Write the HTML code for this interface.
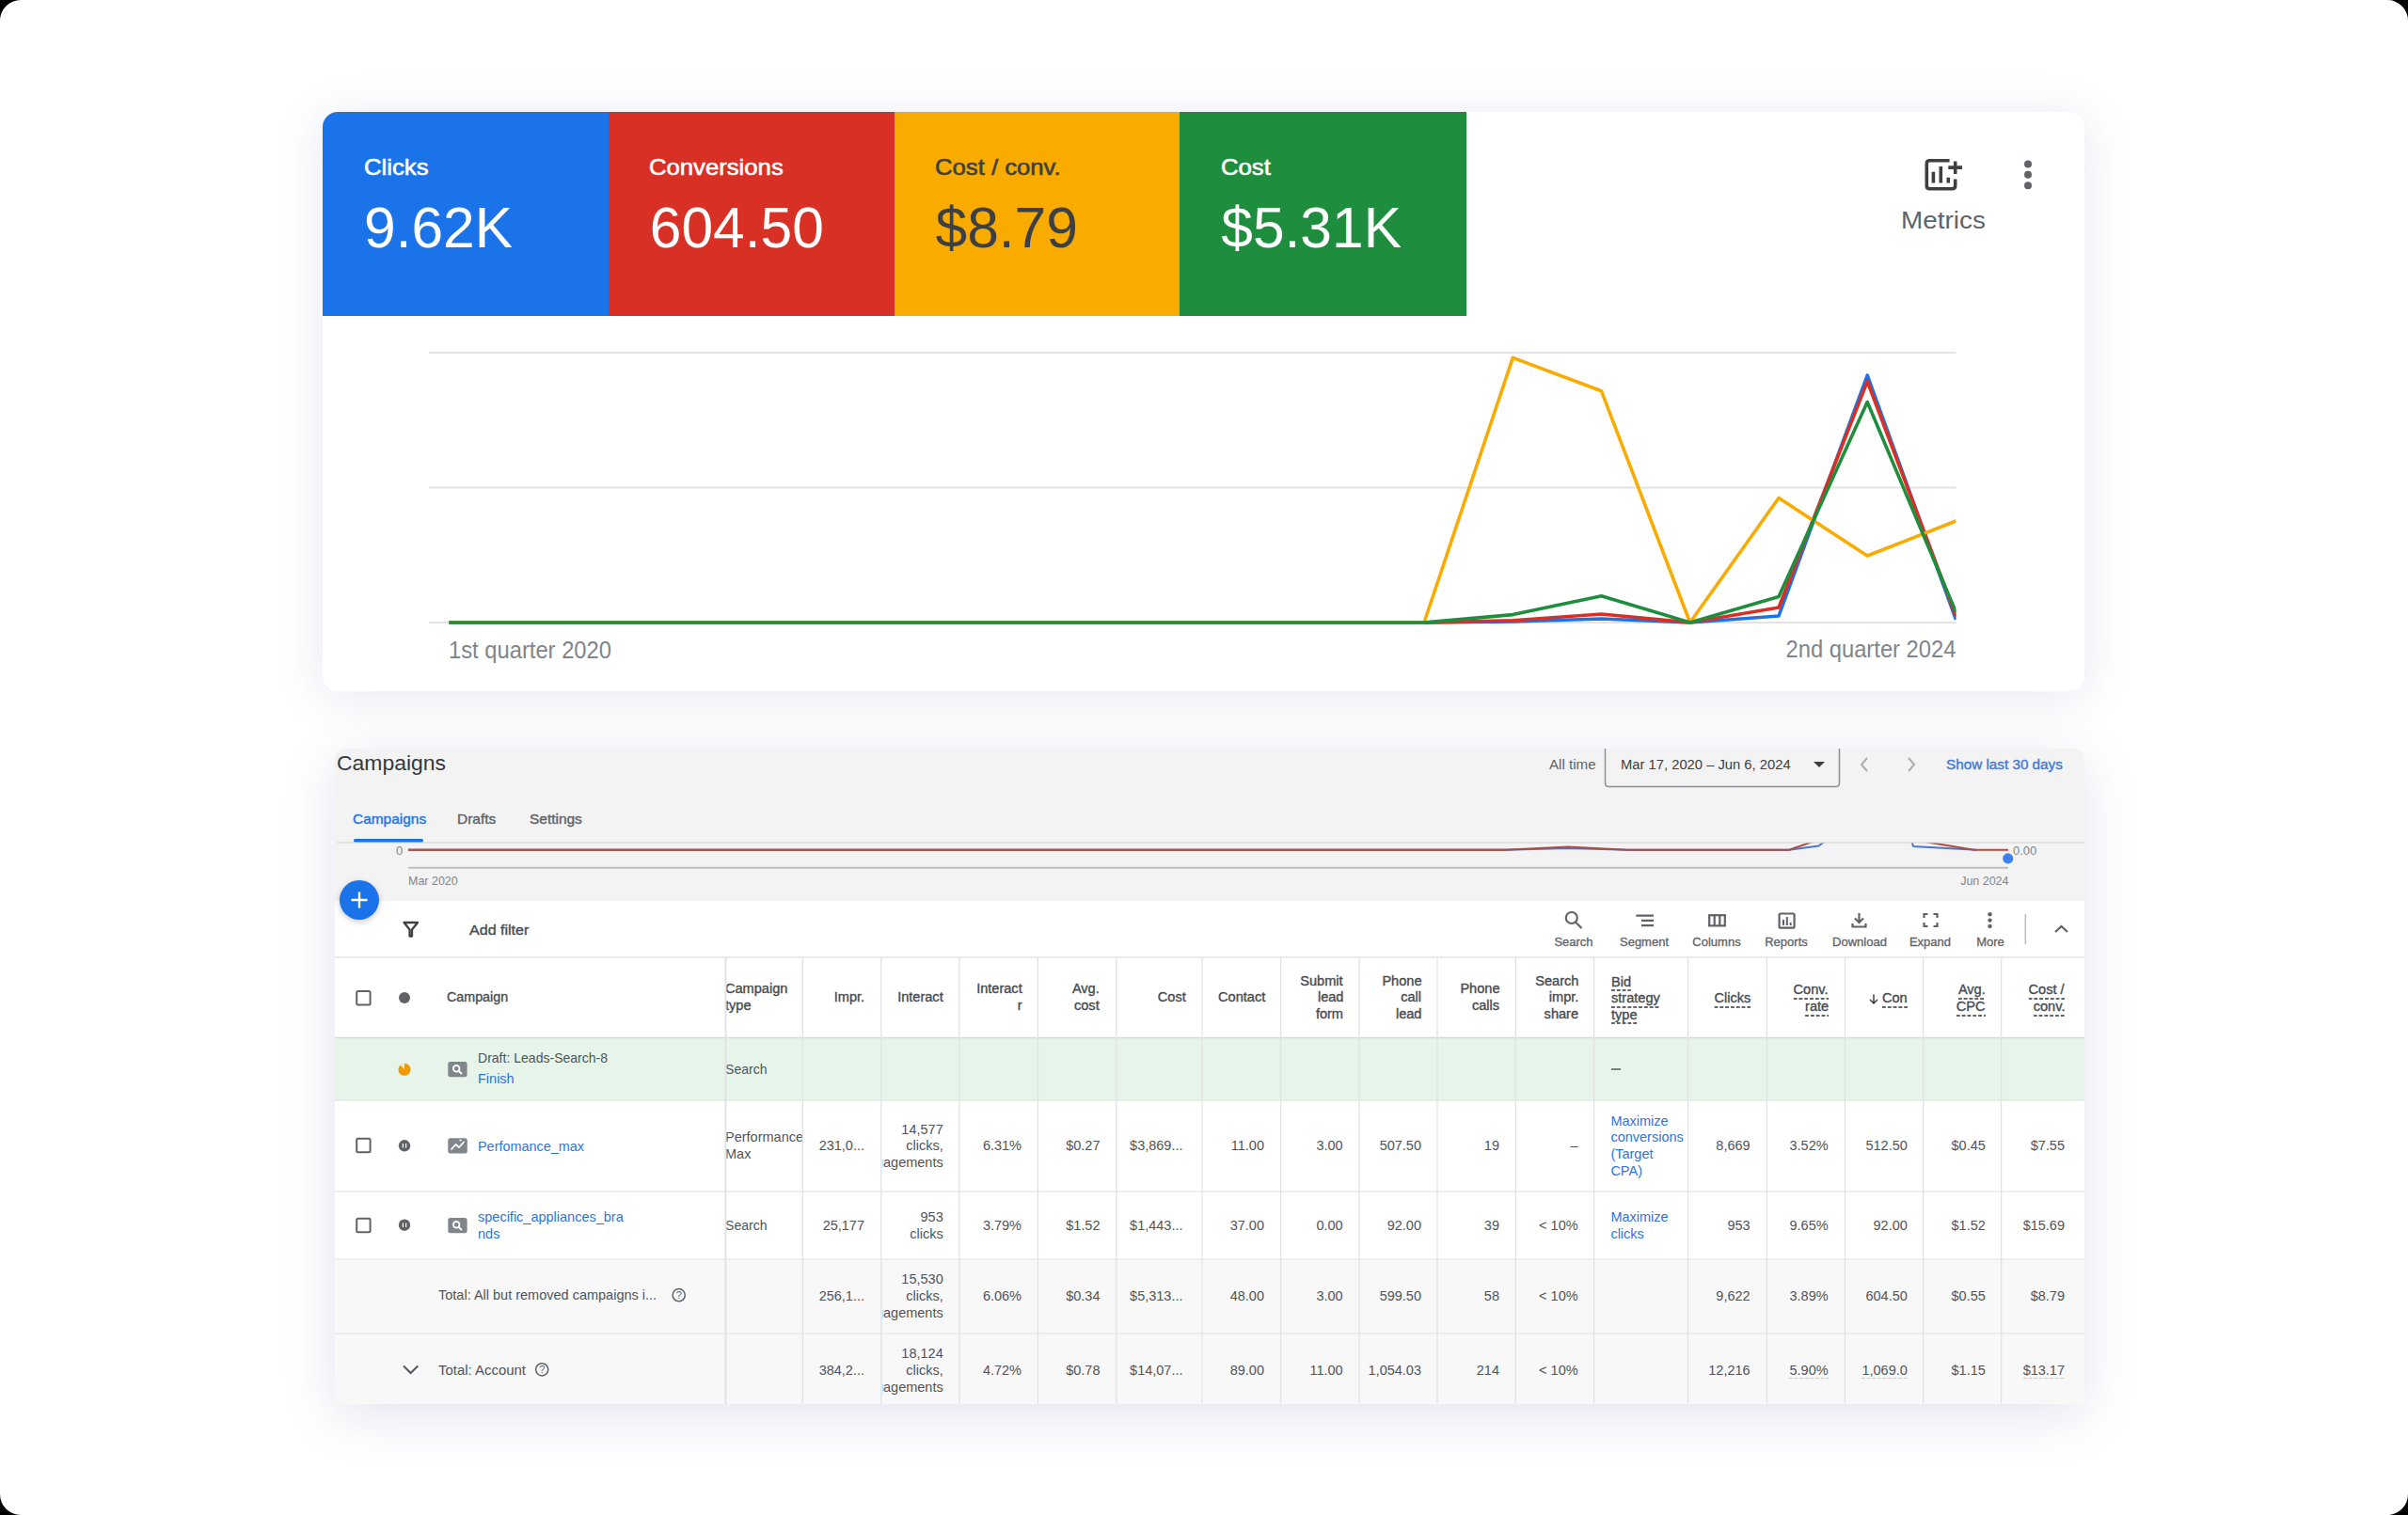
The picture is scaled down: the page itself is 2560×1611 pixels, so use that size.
<!DOCTYPE html><html><head><meta charset="utf-8"><style>html,body{margin:0;padding:0;background:#000;}.pg{position:relative;width:2560px;height:1611px;background:#fff;border-radius:22px;overflow:hidden;font-family:"Liberation Sans",sans-serif;}.t{position:absolute;white-space:nowrap;line-height:1;}.b{position:absolute;}.du{padding-bottom:6px;background-image:linear-gradient(to right,#62666a 62%,transparent 0);background-size:5.6px 1.7px;background-repeat:repeat-x;background-position:0 15.6px;}.dl{padding-bottom:5px;background-image:linear-gradient(to right,#c4c7ca 62%,transparent 0);background-size:5.6px 1.4px;background-repeat:repeat-x;background-position:0 15.3px;}svg{position:absolute;left:0;top:0;}</style></head><body><div class="pg">
<div class="b" style="left:343px;top:119px;width:1873px;height:616px;background:#fff;border-radius:16px;box-shadow:0 6px 52px rgba(80,70,160,.13);"></div>
<div class="b" style="left:343.0px;top:119px;width:304.25px;height:217px;background:#1a73e8;border-top-left-radius:16px;"></div>
<div class="b" style="left:646.75px;top:119px;width:304.25px;height:217px;background:#d93025;"></div>
<div class="b" style="left:950.5px;top:119px;width:304.25px;height:217px;background:#f9ab00;"></div>
<div class="b" style="left:1254.25px;top:119px;width:304.25px;height:217px;background:#1e8e3e;"></div>
<div class="t " style="top:165.68px;font-size:24px;color:#fff;-webkit-text-stroke:0.60px #fff;left:386.50px;transform:scaleX(1.07);transform-origin:left center;">Clicks</div>
<div class="t " style="top:212.29px;font-size:60.5px;color:#fff;left:387.00px;">9.62K</div>
<div class="t " style="top:165.68px;font-size:24px;color:#fff;-webkit-text-stroke:0.60px #fff;left:690.25px;transform:scaleX(1.07);transform-origin:left center;">Conversions</div>
<div class="t " style="top:212.29px;font-size:60.5px;color:#fff;left:690.75px;">604.50</div>
<div class="t " style="top:165.68px;font-size:24px;color:#3c4043;-webkit-text-stroke:0.60px #3c4043;left:994.00px;transform:scaleX(1.07);transform-origin:left center;">Cost / conv.</div>
<div class="t " style="top:212.29px;font-size:60.5px;color:#3c4043;left:994.50px;">$8.79</div>
<div class="t " style="top:165.68px;font-size:24px;color:#fff;-webkit-text-stroke:0.60px #fff;left:1297.75px;transform:scaleX(1.07);transform-origin:left center;">Cost</div>
<div class="t " style="top:212.29px;font-size:60.5px;color:#fff;left:1298.25px;">$5.31K</div>
<div class="t " style="top:222.14px;font-size:25px;color:#5f6368;left:1565.50px;width:1000px;text-align:center;transform:scaleX(1.115);transform-origin:center center;">Metrics</div>
<div class="t " style="top:679.34px;font-size:25px;color:#80868b;left:477.00px;transform:scaleX(0.95);transform-origin:left center;">1st quarter 2020</div>
<div class="t " style="top:677.84px;font-size:25px;color:#80868b;right:481.00px;text-align:right;transform:scaleX(0.95);transform-origin:right center;">2nd quarter 2024</div>
<div class="b" style="left:356px;top:796px;width:1860px;height:697px;background:#fff;border-radius:10px 10px 4px 4px;box-shadow:0 12px 56px rgba(80,70,160,.15);"></div>
<div class="b" style="left:356px;top:796px;width:1860px;height:162px;background:#f3f3f3;border-radius:10px 10px 0 0;"></div>
<div class="t " style="top:800.95px;font-size:22.5px;color:#35393d;left:358.00px;transform:scaleX(1.02);transform-origin:left center;">Campaigns</div>
<div class="t " style="top:862.80px;font-size:15px;color:#1a73e8;-webkit-text-stroke:0.38px #1a73e8;left:375.00px;transform:scaleX(1.03);transform-origin:left center;">Campaigns</div>
<div class="t " style="top:862.80px;font-size:15px;color:#5f6368;-webkit-text-stroke:0.38px #5f6368;left:486.00px;transform:scaleX(1.03);transform-origin:left center;">Drafts</div>
<div class="t " style="top:862.80px;font-size:15px;color:#5f6368;-webkit-text-stroke:0.38px #5f6368;left:562.50px;transform:scaleX(1.03);transform-origin:left center;">Settings</div>
<div class="t " style="top:805.65px;font-size:14px;color:#5f6368;left:1647.00px;transform:scaleX(1.08);transform-origin:left center;">All time</div>
<div class="t " style="top:805.65px;font-size:14px;color:#3c4043;left:1723.00px;transform:scaleX(1.055);transform-origin:left center;">Mar 17, 2020 – Jun 6, 2024</div>
<div class="t " style="top:806.15px;font-size:14px;color:#3d7ad6;-webkit-text-stroke:0.35px #3d7ad6;left:2069.00px;transform:scaleX(1.09);transform-origin:left center;">Show last 30 days</div>
<div class="t " style="top:898.00px;font-size:13px;color:#80868b;left:421.00px;">0</div>
<div class="t " style="top:898.00px;font-size:13px;color:#80868b;left:2140.00px;">0.00</div>
<div class="t " style="top:929.50px;font-size:13px;color:#80868b;left:434.00px;transform:scaleX(0.96);transform-origin:left center;">Mar 2020</div>
<div class="t " style="top:929.50px;font-size:13px;color:#80868b;right:425.00px;text-align:right;transform:scaleX(0.96);transform-origin:right center;">Jun 2024</div>
<div class="b" style="left:361px;top:936px;width:42px;height:42px;background:#1a73e8;border-radius:50%;box-shadow:0 2px 6px rgba(0,0,0,.22);"></div>
<div class="t " style="top:981.30px;font-size:15px;color:#4a4e52;-webkit-text-stroke:0.38px #4a4e52;left:498.50px;transform:scaleX(1.07);transform-origin:left center;">Add filter</div>
<div class="t " style="top:996.42px;font-size:12.5px;color:#5f6368;-webkit-text-stroke:0.31px #5f6368;left:1172.80px;width:1000px;text-align:center;transform:scaleX(1.04);transform-origin:center center;">Search</div>
<div class="t " style="top:996.42px;font-size:12.5px;color:#5f6368;-webkit-text-stroke:0.31px #5f6368;left:1248.00px;width:1000px;text-align:center;transform:scaleX(1.04);transform-origin:center center;">Segment</div>
<div class="t " style="top:996.42px;font-size:12.5px;color:#5f6368;-webkit-text-stroke:0.31px #5f6368;left:1325.00px;width:1000px;text-align:center;transform:scaleX(1.04);transform-origin:center center;">Columns</div>
<div class="t " style="top:996.42px;font-size:12.5px;color:#5f6368;-webkit-text-stroke:0.31px #5f6368;left:1399.40px;width:1000px;text-align:center;transform:scaleX(1.04);transform-origin:center center;">Reports</div>
<div class="t " style="top:996.42px;font-size:12.5px;color:#5f6368;-webkit-text-stroke:0.31px #5f6368;left:1476.60px;width:1000px;text-align:center;transform:scaleX(1.04);transform-origin:center center;">Download</div>
<div class="t " style="top:996.42px;font-size:12.5px;color:#5f6368;-webkit-text-stroke:0.31px #5f6368;left:1552.00px;width:1000px;text-align:center;transform:scaleX(1.04);transform-origin:center center;">Expand</div>
<div class="t " style="top:996.42px;font-size:12.5px;color:#5f6368;-webkit-text-stroke:0.31px #5f6368;left:1615.50px;width:1000px;text-align:center;transform:scaleX(1.04);transform-origin:center center;">More</div>
<div class="b" style="left:356px;top:1103px;width:1860px;height:67px;background:#e6f4ea;"></div>
<div class="b" style="left:356px;top:1339px;width:1860px;height:154px;background:#f8f8f9;border-radius:0 0 4px 4px;"></div>
<div class="t " style="top:1053.15px;font-size:14px;color:#474b4f;-webkit-text-stroke:0.35px #474b4f;left:474.50px;transform:scaleX(1.02);transform-origin:left center;">Campaign</div>
<div class="t " style="top:1044.32px;font-size:14px;color:#474b4f;-webkit-text-stroke:0.35px #474b4f;left:770.50px;transform:scaleX(1.04);transform-origin:left center;">Campaign</div>
<div class="t " style="top:1061.97px;font-size:14px;color:#474b4f;-webkit-text-stroke:0.35px #474b4f;left:770.50px;transform:scaleX(1.04);transform-origin:left center;">type</div>
<div class="t " style="top:1053.15px;font-size:14px;color:#474b4f;-webkit-text-stroke:0.35px #474b4f;right:1641.00px;text-align:right;transform:scaleX(1.04);transform-origin:right center;">Impr.</div>
<div class="t " style="top:1053.15px;font-size:14px;color:#474b4f;-webkit-text-stroke:0.35px #474b4f;right:1557.00px;text-align:right;transform:scaleX(1.04);transform-origin:right center;">Interact</div>
<div class="t " style="top:1044.32px;font-size:14px;color:#474b4f;-webkit-text-stroke:0.35px #474b4f;right:1473.00px;text-align:right;transform:scaleX(1.04);transform-origin:right center;">Interact</div>
<div class="t " style="top:1061.97px;font-size:14px;color:#474b4f;-webkit-text-stroke:0.35px #474b4f;right:1473.00px;text-align:right;transform:scaleX(1.04);transform-origin:right center;">r</div>
<div class="t " style="top:1044.32px;font-size:14px;color:#474b4f;-webkit-text-stroke:0.35px #474b4f;right:1391.00px;text-align:right;transform:scaleX(1.04);transform-origin:right center;">Avg.</div>
<div class="t " style="top:1061.97px;font-size:14px;color:#474b4f;-webkit-text-stroke:0.35px #474b4f;right:1391.00px;text-align:right;transform:scaleX(1.04);transform-origin:right center;">cost</div>
<div class="t " style="top:1053.15px;font-size:14px;color:#474b4f;-webkit-text-stroke:0.35px #474b4f;right:1299.00px;text-align:right;transform:scaleX(1.04);transform-origin:right center;">Cost</div>
<div class="t " style="top:1053.15px;font-size:14px;color:#474b4f;-webkit-text-stroke:0.35px #474b4f;right:1215.00px;text-align:right;transform:scaleX(1.04);transform-origin:right center;">Contact</div>
<div class="t " style="top:1035.50px;font-size:14px;color:#474b4f;-webkit-text-stroke:0.35px #474b4f;right:1132.00px;text-align:right;transform:scaleX(1.04);transform-origin:right center;">Submit</div>
<div class="t " style="top:1053.15px;font-size:14px;color:#474b4f;-webkit-text-stroke:0.35px #474b4f;right:1132.00px;text-align:right;transform:scaleX(1.04);transform-origin:right center;">lead</div>
<div class="t " style="top:1070.80px;font-size:14px;color:#474b4f;-webkit-text-stroke:0.35px #474b4f;right:1132.00px;text-align:right;transform:scaleX(1.04);transform-origin:right center;">form</div>
<div class="t " style="top:1035.50px;font-size:14px;color:#474b4f;-webkit-text-stroke:0.35px #474b4f;right:1049.00px;text-align:right;transform:scaleX(1.04);transform-origin:right center;">Phone</div>
<div class="t " style="top:1053.15px;font-size:14px;color:#474b4f;-webkit-text-stroke:0.35px #474b4f;right:1049.00px;text-align:right;transform:scaleX(1.04);transform-origin:right center;">call</div>
<div class="t " style="top:1070.80px;font-size:14px;color:#474b4f;-webkit-text-stroke:0.35px #474b4f;right:1049.00px;text-align:right;transform:scaleX(1.04);transform-origin:right center;">lead</div>
<div class="t " style="top:1044.32px;font-size:14px;color:#474b4f;-webkit-text-stroke:0.35px #474b4f;right:965.50px;text-align:right;transform:scaleX(1.04);transform-origin:right center;">Phone</div>
<div class="t " style="top:1061.97px;font-size:14px;color:#474b4f;-webkit-text-stroke:0.35px #474b4f;right:965.50px;text-align:right;transform:scaleX(1.04);transform-origin:right center;">calls</div>
<div class="t " style="top:1035.50px;font-size:14px;color:#474b4f;-webkit-text-stroke:0.35px #474b4f;right:882.00px;text-align:right;transform:scaleX(1.04);transform-origin:right center;">Search</div>
<div class="t " style="top:1053.15px;font-size:14px;color:#474b4f;-webkit-text-stroke:0.35px #474b4f;right:882.00px;text-align:right;transform:scaleX(1.04);transform-origin:right center;">impr.</div>
<div class="t " style="top:1070.80px;font-size:14px;color:#474b4f;-webkit-text-stroke:0.35px #474b4f;right:882.00px;text-align:right;transform:scaleX(1.04);transform-origin:right center;">share</div>
<div class="t du" style="top:1036.50px;font-size:14px;color:#474b4f;-webkit-text-stroke:0.35px #474b4f;left:1713.00px;transform:scaleX(1.04);transform-origin:left center;">Bid</div>
<div class="t du" style="top:1054.15px;font-size:14px;color:#474b4f;-webkit-text-stroke:0.35px #474b4f;left:1713.00px;transform:scaleX(1.04);transform-origin:left center;">strategy</div>
<div class="t du" style="top:1071.80px;font-size:14px;color:#474b4f;-webkit-text-stroke:0.35px #474b4f;left:1713.00px;transform:scaleX(1.04);transform-origin:left center;">type</div>
<div class="t du" style="top:1054.15px;font-size:14px;color:#474b4f;-webkit-text-stroke:0.35px #474b4f;right:699.00px;text-align:right;transform:scaleX(1.04);transform-origin:right center;">Clicks</div>
<div class="t du" style="top:1045.32px;font-size:14px;color:#474b4f;-webkit-text-stroke:0.35px #474b4f;right:616.00px;text-align:right;transform:scaleX(1.04);transform-origin:right center;">Conv.</div>
<div class="t du" style="top:1062.97px;font-size:14px;color:#474b4f;-webkit-text-stroke:0.35px #474b4f;right:616.00px;text-align:right;transform:scaleX(1.04);transform-origin:right center;">rate</div>
<div class="t du" style="top:1054.15px;font-size:14px;color:#474b4f;-webkit-text-stroke:0.35px #474b4f;right:532.00px;text-align:right;transform:scaleX(1.04);transform-origin:right center;">Con</div>
<div class="t du" style="top:1045.32px;font-size:14px;color:#474b4f;-webkit-text-stroke:0.35px #474b4f;right:449.00px;text-align:right;transform:scaleX(1.04);transform-origin:right center;">Avg.</div>
<div class="t du" style="top:1062.97px;font-size:14px;color:#474b4f;-webkit-text-stroke:0.35px #474b4f;right:449.00px;text-align:right;transform:scaleX(1.04);transform-origin:right center;">CPC</div>
<div class="t du" style="top:1045.32px;font-size:14px;color:#474b4f;-webkit-text-stroke:0.35px #474b4f;right:365.00px;text-align:right;transform:scaleX(1.04);transform-origin:right center;">Cost /</div>
<div class="t du" style="top:1062.97px;font-size:14px;color:#474b4f;-webkit-text-stroke:0.35px #474b4f;right:365.00px;text-align:right;transform:scaleX(1.04);transform-origin:right center;">conv.</div>
<div class="t " style="top:1118.23px;font-size:14.5px;color:#505458;left:508.00px;transform:scaleX(0.968);transform-origin:left center;">Draft: Leads-Search-8</div>
<div class="t " style="top:1139.53px;font-size:14.5px;color:#2f74dc;left:508.00px;">Finish</div>
<div class="t " style="top:1130.03px;font-size:14.5px;color:#505458;left:771.00px;transform:scaleX(0.97);transform-origin:left center;">Search</div>
<div class="t " style="top:1211.53px;font-size:14.5px;color:#2f74dc;left:508.00px;transform:scaleX(0.995);transform-origin:left center;">Perfomance_max</div>
<div class="b" style="left:771px;top:1190px;width:82px;height:60px;overflow:hidden">
<div class="t" style="top:12.43px;left:0;font-size:14.5px;color:#505458">Performance</div>
<div class="t" style="top:30.03px;left:0;font-size:14.5px;color:#505458">Max</div>
</div>
<div class="t " style="top:1211.43px;font-size:14.5px;color:#505458;right:1641.00px;text-align:right;">231,0...</div>
<div class="t " style="top:1211.43px;font-size:14.5px;color:#505458;right:1474.00px;text-align:right;">6.31%</div>
<div class="t " style="top:1211.43px;font-size:14.5px;color:#505458;right:1390.50px;text-align:right;">$0.27</div>
<div class="t " style="top:1211.43px;font-size:14.5px;color:#505458;right:1302.50px;text-align:right;">$3,869...</div>
<div class="t " style="top:1211.43px;font-size:14.5px;color:#505458;right:1216.00px;text-align:right;">11.00</div>
<div class="t " style="top:1211.43px;font-size:14.5px;color:#505458;right:1132.40px;text-align:right;">3.00</div>
<div class="t " style="top:1211.43px;font-size:14.5px;color:#505458;right:1049.00px;text-align:right;">507.50</div>
<div class="t " style="top:1211.43px;font-size:14.5px;color:#505458;right:966.00px;text-align:right;">19</div>
<div class="t " style="top:1211.43px;font-size:14.5px;color:#505458;right:882.40px;text-align:right;">–</div>
<div class="b" style="left:937.5px;top:1178.5px;width:82px;height:80px;overflow:hidden">
<div class="t" style="top:15.33px;right:16.80px;text-align:right;font-size:14.5px;color:#505458">14,577</div>
<div class="t" style="top:32.93px;right:16.80px;text-align:right;font-size:14.5px;color:#505458">clicks,</div>
<div class="t" style="top:50.53px;right:16.80px;text-align:right;font-size:14.5px;color:#505458">engagements</div>
</div>
<div class="t " style="top:1211.43px;font-size:14.5px;color:#505458;right:699.40px;text-align:right;">8,669</div>
<div class="t " style="top:1211.43px;font-size:14.5px;color:#505458;right:616.40px;text-align:right;">3.52%</div>
<div class="t " style="top:1211.43px;font-size:14.5px;color:#505458;right:532.20px;text-align:right;">512.50</div>
<div class="t " style="top:1211.43px;font-size:14.5px;color:#505458;right:449.20px;text-align:right;">$0.45</div>
<div class="t " style="top:1211.43px;font-size:14.5px;color:#505458;right:365.00px;text-align:right;">$7.55</div>
<div class="t " style="top:1184.83px;font-size:14.5px;color:#2f74dc;left:1712.40px;">Maximize</div>
<div class="t " style="top:1202.43px;font-size:14.5px;color:#2f74dc;left:1712.40px;">conversions</div>
<div class="t " style="top:1220.03px;font-size:14.5px;color:#2f74dc;left:1712.40px;">(Target</div>
<div class="t " style="top:1237.63px;font-size:14.5px;color:#2f74dc;left:1712.40px;">CPA)</div>
<div class="t " style="top:1287.13px;font-size:14.5px;color:#2f74dc;left:508.00px;">specific_appliances_bra</div>
<div class="t " style="top:1304.73px;font-size:14.5px;color:#2f74dc;left:508.00px;">nds</div>
<div class="t " style="top:1296.03px;font-size:14.5px;color:#505458;left:771.00px;transform:scaleX(0.97);transform-origin:left center;">Search</div>
<div class="t " style="top:1295.93px;font-size:14.5px;color:#505458;right:1641.00px;text-align:right;">25,177</div>
<div class="t " style="top:1295.93px;font-size:14.5px;color:#505458;right:1474.00px;text-align:right;">3.79%</div>
<div class="t " style="top:1295.93px;font-size:14.5px;color:#505458;right:1390.50px;text-align:right;">$1.52</div>
<div class="t " style="top:1295.93px;font-size:14.5px;color:#505458;right:1302.50px;text-align:right;">$1,443...</div>
<div class="t " style="top:1295.93px;font-size:14.5px;color:#505458;right:1216.00px;text-align:right;">37.00</div>
<div class="t " style="top:1295.93px;font-size:14.5px;color:#505458;right:1132.40px;text-align:right;">0.00</div>
<div class="t " style="top:1295.93px;font-size:14.5px;color:#505458;right:1049.00px;text-align:right;">92.00</div>
<div class="t " style="top:1295.93px;font-size:14.5px;color:#505458;right:966.00px;text-align:right;">39</div>
<div class="t " style="top:1295.93px;font-size:14.5px;color:#505458;right:882.40px;text-align:right;">&lt; 10%</div>
<div class="b" style="left:937.5px;top:1263px;width:82px;height:80px;overflow:hidden">
<div class="t" style="top:24.13px;right:16.80px;text-align:right;font-size:14.5px;color:#505458">953</div>
<div class="t" style="top:41.73px;right:16.80px;text-align:right;font-size:14.5px;color:#505458">clicks</div>
</div>
<div class="t " style="top:1295.93px;font-size:14.5px;color:#505458;right:699.40px;text-align:right;">953</div>
<div class="t " style="top:1295.93px;font-size:14.5px;color:#505458;right:616.40px;text-align:right;">9.65%</div>
<div class="t " style="top:1295.93px;font-size:14.5px;color:#505458;right:532.20px;text-align:right;">92.00</div>
<div class="t " style="top:1295.93px;font-size:14.5px;color:#505458;right:449.20px;text-align:right;">$1.52</div>
<div class="t " style="top:1295.93px;font-size:14.5px;color:#505458;right:365.00px;text-align:right;">$15.69</div>
<div class="t " style="top:1287.13px;font-size:14.5px;color:#2f74dc;left:1712.40px;">Maximize</div>
<div class="t " style="top:1304.73px;font-size:14.5px;color:#2f74dc;left:1712.40px;">clicks</div>
<div class="t " style="top:1370.33px;font-size:14.5px;color:#505458;left:466.00px;">Total: All but removed campaigns i...</div>
<div class="t " style="top:1371.99px;font-size:11px;color:#5f6368;left:221.70px;width:1000px;text-align:center;">?</div>
<div class="t " style="top:1370.93px;font-size:14.5px;color:#505458;right:1641.00px;text-align:right;">256,1...</div>
<div class="t " style="top:1370.93px;font-size:14.5px;color:#505458;right:1474.00px;text-align:right;">6.06%</div>
<div class="t " style="top:1370.93px;font-size:14.5px;color:#505458;right:1390.50px;text-align:right;">$0.34</div>
<div class="t " style="top:1370.93px;font-size:14.5px;color:#505458;right:1302.50px;text-align:right;">$5,313...</div>
<div class="t " style="top:1370.93px;font-size:14.5px;color:#505458;right:1216.00px;text-align:right;">48.00</div>
<div class="t " style="top:1370.93px;font-size:14.5px;color:#505458;right:1132.40px;text-align:right;">3.00</div>
<div class="t " style="top:1370.93px;font-size:14.5px;color:#505458;right:1049.00px;text-align:right;">599.50</div>
<div class="t " style="top:1370.93px;font-size:14.5px;color:#505458;right:966.00px;text-align:right;">58</div>
<div class="t " style="top:1370.93px;font-size:14.5px;color:#505458;right:882.40px;text-align:right;">&lt; 10%</div>
<div class="b" style="left:937.5px;top:1338px;width:82px;height:80px;overflow:hidden">
<div class="t" style="top:15.33px;right:16.80px;text-align:right;font-size:14.5px;color:#505458">15,530</div>
<div class="t" style="top:32.93px;right:16.80px;text-align:right;font-size:14.5px;color:#505458">clicks,</div>
<div class="t" style="top:50.53px;right:16.80px;text-align:right;font-size:14.5px;color:#505458">engagements</div>
</div>
<div class="t " style="top:1370.93px;font-size:14.5px;color:#505458;right:699.40px;text-align:right;">9,622</div>
<div class="t " style="top:1370.93px;font-size:14.5px;color:#505458;right:616.40px;text-align:right;">3.89%</div>
<div class="t " style="top:1370.93px;font-size:14.5px;color:#505458;right:532.20px;text-align:right;">604.50</div>
<div class="t " style="top:1370.93px;font-size:14.5px;color:#505458;right:449.20px;text-align:right;">$0.55</div>
<div class="t " style="top:1370.93px;font-size:14.5px;color:#505458;right:365.00px;text-align:right;">$8.79</div>
<div class="t " style="top:1449.93px;font-size:14.5px;color:#505458;left:466.00px;transform:scaleX(1.03);transform-origin:left center;">Total: Account</div>
<div class="t " style="top:1451.09px;font-size:11px;color:#5f6368;left:76.20px;width:1000px;text-align:center;">?</div>
<div class="t " style="top:1449.93px;font-size:14.5px;color:#505458;right:1641.00px;text-align:right;">384,2...</div>
<div class="t " style="top:1449.93px;font-size:14.5px;color:#505458;right:1474.00px;text-align:right;">4.72%</div>
<div class="t " style="top:1449.93px;font-size:14.5px;color:#505458;right:1390.50px;text-align:right;">$0.78</div>
<div class="t " style="top:1449.93px;font-size:14.5px;color:#505458;right:1302.50px;text-align:right;">$14,07...</div>
<div class="t " style="top:1449.93px;font-size:14.5px;color:#505458;right:1216.00px;text-align:right;">89.00</div>
<div class="t " style="top:1449.93px;font-size:14.5px;color:#505458;right:1132.40px;text-align:right;">11.00</div>
<div class="t " style="top:1449.93px;font-size:14.5px;color:#505458;right:1049.00px;text-align:right;">1,054.03</div>
<div class="t " style="top:1449.93px;font-size:14.5px;color:#505458;right:966.00px;text-align:right;">214</div>
<div class="t " style="top:1449.93px;font-size:14.5px;color:#505458;right:882.40px;text-align:right;">&lt; 10%</div>
<div class="b" style="left:937.5px;top:1417px;width:82px;height:80px;overflow:hidden">
<div class="t" style="top:15.33px;right:16.80px;text-align:right;font-size:14.5px;color:#505458">18,124</div>
<div class="t" style="top:32.93px;right:16.80px;text-align:right;font-size:14.5px;color:#505458">clicks,</div>
<div class="t" style="top:50.53px;right:16.80px;text-align:right;font-size:14.5px;color:#505458">engagements</div>
</div>
<div class="t " style="top:1449.93px;font-size:14.5px;color:#505458;right:699.40px;text-align:right;">12,216</div>
<div class="t dl" style="top:1449.93px;font-size:14.5px;color:#505458;right:616.40px;text-align:right;">5.90%</div>
<div class="t dl" style="top:1449.93px;font-size:14.5px;color:#505458;right:532.20px;text-align:right;">1,069.0</div>
<div class="t " style="top:1449.93px;font-size:14.5px;color:#505458;right:449.20px;text-align:right;">$1.15</div>
<div class="t dl" style="top:1449.93px;font-size:14.5px;color:#505458;right:365.00px;text-align:right;">$13.17</div>
<svg width="2560" height="1611" viewBox="0 0 2560 1611"><line x1="456" y1="375" x2="2079.5" y2="375" stroke="#e3e3e3" stroke-width="2"/><line x1="456" y1="518.5" x2="2079.5" y2="518.5" stroke="#e3e3e3" stroke-width="2"/><line x1="456" y1="662" x2="2079.5" y2="662" stroke="#e3e3e3" stroke-width="2"/><clipPath id="cc"><rect x="440" y="340" width="1639.6" height="340"/></clipPath><g clip-path="url(#cc)" fill="none" stroke-width="3.6" stroke-linejoin="round"><polyline points="477.5,662.0 571.7,662.0 666.0,662.0 760.2,662.0 854.4,662.0 948.7,662.0 1042.9,662.0 1137.1,662.0 1231.3,662.0 1325.6,662.0 1419.8,662.0 1514.0,662.0 1608.3,661.0 1702.5,658.0 1796.7,662.0 1891.0,655.0 1985.2,399.0 2079.4,659.0" stroke="#1a73e8"/><polyline points="477.5,662.0 571.7,662.0 666.0,662.0 760.2,662.0 854.4,662.0 948.7,662.0 1042.9,662.0 1137.1,662.0 1231.3,662.0 1325.6,662.0 1419.8,662.0 1514.0,662.0 1608.3,659.8 1702.5,653.0 1796.7,662.0 1891.0,646.0 1985.2,405.5 2079.4,655.0" stroke="#d93025"/><polyline points="477.5,662.0 571.7,662.0 666.0,662.0 760.2,662.0 854.4,662.0 948.7,662.0 1042.9,662.0 1137.1,662.0 1231.3,662.0 1325.6,662.0 1419.8,662.0 1514.0,662.0 1608.3,380.4 1702.5,415.8 1796.7,662.0 1891.0,529.5 1985.2,591.0 2079.4,554.0" stroke="#f9ab00"/><polyline points="477.5,662.0 571.7,662.0 666.0,662.0 760.2,662.0 854.4,662.0 948.7,662.0 1042.9,662.0 1137.1,662.0 1231.3,662.0 1325.6,662.0 1419.8,662.0 1514.0,662.0 1608.3,653.6 1702.5,633.7 1796.7,662.0 1891.0,634.5 1985.2,427.5 2079.4,651.0" stroke="#1e8e3e"/></g><g fill="none" stroke="#3c4043" stroke-width="3.6" stroke-linejoin="round"><path d="M2072.6,170.7 H2051.5 Q2048.3,170.7 2048.3,173.9 V197.5 Q2048.3,200.7 2051.5,200.7 H2075.5 Q2078.7,200.7 2078.7,197.5 V190.6"/><path d="M2071.3,178.1 H2086 M2078.7,171.5 V185"/><path d="M2055.4,182.7 V194.6 M2063.3,177.1 V194.6 M2071.3,188.7 V194.6"/></g><circle cx="2156" cy="174.5" r="4" fill="#5f6368"/><circle cx="2156" cy="185.8" r="4" fill="#5f6368"/><circle cx="2156" cy="197.2" r="4" fill="#5f6368"/><line x1="358" y1="896" x2="2216" y2="896" stroke="#dcdcdc" stroke-width="1.5"/><rect x="376" y="892" width="74" height="3.5" rx="1.5" fill="#1a73e8"/><path d="M1706.5,796 V832.5 Q1706.5,836.5 1710.5,836.5 H1951.5 Q1955.5,836.5 1955.5,832.5 V796" fill="none" stroke="#8d9196" stroke-width="1.5"/><path d="M1928,810 L1940,810 L1934,816 Z" fill="#3c4043"/><path d="M1985,806 L1979,813 L1985,820" fill="none" stroke="#a9adb1" stroke-width="2"/><path d="M2029,806 L2035,813 L2029,820" fill="none" stroke="#a9adb1" stroke-width="2"/><line x1="434" y1="922.7" x2="2135" y2="922.7" stroke="#bdbdbd" stroke-width="2"/><clipPath id="mc"><rect x="400" y="896.5" width="1760" height="40"/></clipPath><g clip-path="url(#mc)" fill="none" stroke-width="2" stroke-linejoin="round"><polyline points="434,903.8 1600,903.8 1667,902 1730,903.8 1902,903.8 1933.5,899.5 1942,893" stroke="#4a78d0"/><polyline points="1942,893 2032,893 2034,900 2101,903.8" stroke="#4a78d0"/><polyline points="434,903.8 1600,903.8 1667,900.4 1730,903.8 1902,903.8 1930,894" stroke="#b24a3e"/><polyline points="2040,894 2098.6,903.8 2135,903.8" stroke="#b24a3e"/></g><line x1="434" y1="903.8" x2="1600" y2="903.8" stroke="#a8574c" stroke-width="2"/><circle cx="2134.7" cy="912.9" r="5.6" fill="#3b82f0"/><path d="M382,948.5 V965.5 M373.5,957 H390.5" stroke="#fff" stroke-width="2.4"/><path d="M429.5,981 H444 L438,988.5 V995.5 H435.5 V988.5 Z" fill="none" stroke="#3c4043" stroke-width="2.3" stroke-linejoin="round"/><line x1="356" y1="1018" x2="2216" y2="1018" stroke="#e3e3e3" stroke-width="1.5"/><g fill="none" stroke="#5f6368" stroke-width="2.2"><circle cx="1670.8" cy="976" r="6"/><path d="M1675,980.5 L1681.5,987"/><path d="M1739.4,973.7 H1758 M1745,978.8 H1758 M1745,984.2 H1758"/><rect x="1817.2" y="973.2" width="16.6" height="11.2"/><path d="M1822.7,973.2 V984.4 M1828.3,973.2 V984.4"/><rect x="1891.6" y="971.5" width="16" height="15.2" rx="1.5"/><path d="M1896,978 V984 M1899.8,975 V984 M1903.6,981 V984" stroke-width="2"/><path d="M1976.5,971 V980.5 M1972,976.5 L1976.5,981 L1981,976.5 M1969.5,982 V985.5 H1983.5 V982"/><path d="M2045.5,976 V972 H2049.5 M2055.5,972 H2059.5 V976 M2059.5,981 V985 H2055.5 M2049.5,985 H2045.5 V981"/><path d="M2153.3,972 V1004" stroke="#bdc1c6" stroke-width="1.6"/><path d="M2185,991 L2191.5,985 L2198,991" stroke="#5f6368"/></g><circle cx="2115.5" cy="972.3" r="2.2" fill="#5f6368"/><circle cx="2115.5" cy="978.6" r="2.2" fill="#5f6368"/><circle cx="2115.5" cy="985" r="2.2" fill="#5f6368"/><line x1="356" y1="1103.5" x2="2216" y2="1103.5" stroke="#d5dbd7" stroke-width="1.6"/><line x1="356" y1="1170" x2="2216" y2="1170" stroke="#e3e8e5" stroke-width="1.6"/><line x1="356" y1="1267" x2="2216" y2="1267" stroke="#e8eaed" stroke-width="1.6"/><line x1="356" y1="1339" x2="2216" y2="1339" stroke="#e8eaed" stroke-width="1.6"/><line x1="356" y1="1418" x2="2216" y2="1418" stroke="#e8eaed" stroke-width="1.6"/><line x1="771.5" y1="1018" x2="771.5" y2="1493" stroke="#e0e3e6" stroke-width="2"/><line x1="853.3" y1="1018" x2="853.3" y2="1493" stroke="#e0e3e6" stroke-width="1.3"/><line x1="936.8" y1="1018" x2="936.8" y2="1493" stroke="#e0e3e6" stroke-width="1.3"/><line x1="1019.8" y1="1018" x2="1019.8" y2="1493" stroke="#e0e3e6" stroke-width="1.3"/><line x1="1103.4" y1="1018" x2="1103.4" y2="1493" stroke="#e0e3e6" stroke-width="1.3"/><line x1="1186.8" y1="1018" x2="1186.8" y2="1493" stroke="#e0e3e6" stroke-width="1.3"/><line x1="1278" y1="1018" x2="1278" y2="1493" stroke="#e0e3e6" stroke-width="1.3"/><line x1="1361.6" y1="1018" x2="1361.6" y2="1493" stroke="#e0e3e6" stroke-width="1.3"/><line x1="1445" y1="1018" x2="1445" y2="1493" stroke="#e0e3e6" stroke-width="1.3"/><line x1="1528" y1="1018" x2="1528" y2="1493" stroke="#e0e3e6" stroke-width="1.3"/><line x1="1611.3" y1="1018" x2="1611.3" y2="1493" stroke="#e0e3e6" stroke-width="1.3"/><line x1="1694.6" y1="1018" x2="1694.6" y2="1493" stroke="#e0e3e6" stroke-width="1.3"/><line x1="1794.6" y1="1018" x2="1794.6" y2="1493" stroke="#e0e3e6" stroke-width="1.3"/><line x1="1878.4" y1="1018" x2="1878.4" y2="1493" stroke="#e0e3e6" stroke-width="1.3"/><line x1="1961.5" y1="1018" x2="1961.5" y2="1493" stroke="#e0e3e6" stroke-width="1.3"/><line x1="2044.6" y1="1018" x2="2044.6" y2="1493" stroke="#e0e3e6" stroke-width="1.3"/><line x1="2127.6" y1="1018" x2="2127.6" y2="1493" stroke="#e0e3e6" stroke-width="1.3"/><rect x="379.2" y="1054" width="14.4" height="14.4" rx="1.5" fill="none" stroke="#5f6368" stroke-width="2"/><circle cx="430" cy="1061" r="6" fill="#5f6368"/><path d="M1992,1057.5 V1067 M1988,1063 L1992,1067 L1996,1063" fill="none" stroke="#3c4043" stroke-width="1.5"/><circle cx="430" cy="1137.3" r="6.5" fill="#f29900"/><path d="M430,1137.3 L430,1130.8 A6.5,6.5 0 0,0 425.5,1132.6 Z" fill="#fde9c6"/><rect x="476.3" y="1129" width="20.3" height="16.3" rx="2.5" fill="#80868b"/><circle cx="485.2" cy="1136.3" r="3.3" fill="none" stroke="#fff" stroke-width="1.8"/><path d="M487.6,1138.7 L491,1142" stroke="#fff" stroke-width="1.9"/><line x1="1713" y1="1137" x2="1723" y2="1137" stroke="#3c4043" stroke-width="1.3"/><rect x="379.2" y="1210.8" width="14.4" height="14.4" rx="1.5" fill="none" stroke="#5f6368" stroke-width="2"/><circle cx="430" cy="1218.3" r="6.2" fill="#5f6368"/><path d="M428.4,1216.0 V1220.6 M431.6,1216.0 V1220.6" stroke="#fff" stroke-width="1.2"/><rect x="476.3" y="1210.3" width="20.5" height="16.3" rx="2.5" fill="#80868b"/><path d="M479.5,1222.5 L484.5,1217 L488,1220 L493.5,1214" fill="none" stroke="#fff" stroke-width="1.8" stroke-linejoin="round"/><circle cx="489.5" cy="1212.5" r="1.1" fill="#fff"/><rect x="379.2" y="1295.8" width="14.4" height="14.4" rx="1.5" fill="none" stroke="#5f6368" stroke-width="2"/><circle cx="430" cy="1302.7" r="6.2" fill="#5f6368"/><path d="M428.4,1300.4 V1305.0 M431.6,1300.4 V1305.0" stroke="#fff" stroke-width="1.2"/><rect x="476.3" y="1295" width="20.3" height="16.3" rx="2.5" fill="#80868b"/><circle cx="485.2" cy="1302.3" r="3.3" fill="none" stroke="#fff" stroke-width="1.8"/><path d="M487.6,1304.7 L491,1308" stroke="#fff" stroke-width="1.9"/><circle cx="721.7" cy="1377.2" r="6.6" fill="none" stroke="#5f6368" stroke-width="1.5"/><path d="M429,1452.5 L436.6,1460 L444.2,1452.5" fill="none" stroke="#54585c" stroke-width="2"/><circle cx="576.2" cy="1456.3" r="6.6" fill="none" stroke="#5f6368" stroke-width="1.5"/></svg>
</div></body></html>
